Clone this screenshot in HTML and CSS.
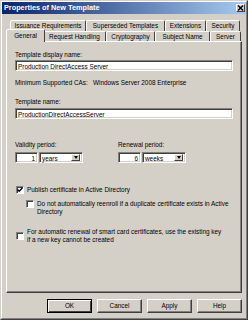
FILE: index.html
```html
<!DOCTYPE html>
<html lang="en">

<head>
    <meta charset="UTF-8">
    <title>Properties of New Template</title>
    <link rel="stylesheet" href="styles.css">
</head>

<body>
    <div class="window">
        <div class="frame">
            <div class="titlebar">
                <span class="title">Properties of New Template</span>
                <span class="close">
                    <svg width="7" height="6" viewBox="0 0 7 6">
                        <path d="M1 0.5 L6 5.5 M6 0.5 L1 5.5" stroke="#000" stroke-width="1.4" fill="none" />
                    </svg>
                </span>
            </div>

            <div class="content">
                <div class="tabrow back">
                    <div class="tab w76">Issuance Requirements</div>
                    <div class="tab w79">Superseded Templates</div>
                    <div class="tab w41">Extensions</div>
                    <div class="tab w34">Security</div>
                </div>
                <div class="tabrow front">
                    <div class="tab selected">General</div>
                    <div class="tab w63">Request Handling</div>
                    <div class="tab w49">Cryptography</div>
                    <div class="tab w55">Subject Name</div>
                    <div class="tab w31">Server</div>
                </div>

                <div class="panel">
                    <div class="label">Template display name:</div>
                    <div class="field wide">Production DirectAccess Server</div>

                    <div class="info">
                        <span class="info-key">Minimum Supported CAs:</span><span>Windows Server 2008 Enterprise</span>
                    </div>

                    <div class="label name-label">Template name:</div>
                    <div class="field wide short-gap">ProductionDirectAccessServer</div>

                    <div class="periods">
                        <div class="period">
                            <div class="label">Validity period:</div>
                            <div class="period-controls">
                                <div class="field number">1</div>
                                <div class="field select">
                                    <span>years</span>
                                    <span class="drop"><span class="arrow"></span></span>
                                </div>
                            </div>
                        </div>
                        <div class="period">
                            <div class="label">Renewal period:</div>
                            <div class="period-controls">
                                <div class="field number">6</div>
                                <div class="field select">
                                    <span>weeks</span>
                                    <span class="drop"><span class="arrow"></span></span>
                                </div>
                            </div>
                        </div>
                    </div>

                    <div class="check publish">
                        <span class="box">
                            <svg width="6" height="6" viewBox="0 0 6 6">
                                <path d="M0.5 2.5 L2.2 4.3 L5.5 0.8" stroke="#000" stroke-width="1.3" fill="none" />
                            </svg>
                        </span>
                        <span>Publish certificate in Active Directory</span>
                    </div>

                    <div class="check nested">
                        <span class="box"></span>
                        <span>Do not automatically reenroll if a duplicate certificate exists in Active<br>Directory</span>
                    </div>

                    <div class="check smartcard">
                        <span class="box"></span>
                        <span>For automatic renewal of smart card certificates, use the existing key<br>if a new key cannot be created</span>
                    </div>
                </div>

                <div class="buttons">
                    <div class="button default">OK</div>
                    <div class="button">Cancel</div>
                    <div class="button">Apply</div>
                    <div class="button">Help</div>
                </div>
            </div>
        </div>
    </div>
</body>

</html>
```

FILE: styles.css
```css
* {
    box-sizing: border-box;
}

body {
    margin: 0;
    font-family: "Liberation Sans", Arial, sans-serif;
    font-size: 6.4px;
    line-height: 8px;
    color: #000;
    background-color: #d4d0c8;
}

.window {
    width: 248px;
    height: 320px;
    border: 1px solid;
    border-color: #d4d0c8 #404040 #404040 #d4d0c8;
}

.frame {
    height: 100%;
    border: 1px solid;
    border-color: #fff #808080 #808080 #fff;
}

.titlebar {
    height: 12px;
    display: flex;
    align-items: center;
    justify-content: space-between;
    padding: 0 1px 0 2px;
    background: linear-gradient(to right, #0a246a, #a6caf0);
}

.title {
    color: #fff;
    font-weight: bold;
    font-size: 7.3px;
}

.close {
    width: 9px;
    height: 8px;
    display: flex;
    align-items: center;
    justify-content: center;
    background-color: #d4d0c8;
    border: 1px solid;
    border-color: #fff #404040 #404040 #fff;
}

.content {
    padding: 6px 4px 0;
}

/* tabs */
.tabrow {
    display: flex;
}

.tabrow.back {
    padding-left: 4px;
    height: 11px;
}

.tabrow.front {
    padding-left: 2px;
    height: 10px;
}

.tab {
    text-align: center;
    white-space: nowrap;
    line-height: 9px;
    border: 1px solid;
    border-bottom: none;
    border-color: #fff #404040 transparent #fff;
    border-radius: 2px 2px 0 0;
    background-color: #d4d0c8;
}

.tab.selected {
    position: relative;
    z-index: 1;
    width: 39px;
    height: 13px;
    margin: -2px -2px 0;
    padding-top: 1px;
}

.w31 { width: 31px; }
.w34 { width: 34px; }
.w41 { width: 41px; }
.w49 { width: 49px; }
.w55 { width: 55px; }
.w63 { width: 63px; }
.w76 { width: 76px; }
.w79 { width: 79px; }

/* panel */
.panel {
    height: 252px;
    padding: 9px 8px 0;
    border: 1px solid;
    border-color: #fff #404040 #404040 #fff;
    box-shadow: inset -1px -1px #808080;
}

.field {
    height: 11px;
    margin-top: 1px;
    padding: 0 2px;
    line-height: 11px;
    background-color: #fff;
    border: 1px solid;
    border-color: #808080 #fff #fff #808080;
    box-shadow: inset 1px 1px #404040, inset -1px -1px #d4d0c8;
    white-space: nowrap;
}

.field.wide {
    width: 218px;
}

.field.short-gap {
    margin-top: 2px;
}

.info {
    margin-top: 8px;
}

.info-key {
    display: inline-block;
    width: 78px;
}

.name-label {
    margin-top: 11px;
}

.periods {
    display: grid;
    grid-template-columns: 103px auto;
    margin-top: 22px;
}

.period-controls {
    display: flex;
    gap: 1px;
    margin-top: 3px;
}

.period-controls .field {
    margin-top: 0;
}

.field.number {
    width: 23px;
    text-align: right;
}

.field.select {
    width: 44px;
    display: flex;
    justify-content: space-between;
    padding: 0 2px 0 2px;
}

.drop {
    width: 9px;
    height: 7px;
    margin-top: 1px;
    display: flex;
    align-items: center;
    justify-content: center;
    background-color: #d4d0c8;
    border: 1px solid;
    border-color: #fff #404040 #404040 #fff;
}

.arrow {
    width: 0;
    height: 0;
    border-left: 2.5px solid transparent;
    border-right: 2.5px solid transparent;
    border-top: 3px solid #000;
}

/* checkboxes */
.check {
    display: flex;
    gap: 3px;
}

.box {
    flex: none;
    width: 8px;
    height: 8px;
    display: flex;
    align-items: center;
    justify-content: center;
    background-color: #fff;
    border: 1px solid;
    border-color: #808080 #fff #fff #808080;
    box-shadow: inset 1px 1px #404040;
}

.check.publish {
    margin: 23px 0 0 1px;
    align-items: center;
}

.check.nested {
    margin: 6px 0 0 11px;
    align-items: flex-start;
}

.check.smartcard {
    margin: 12px 0 0 1px;
    align-items: center;
}

/* buttons */
.buttons {
    display: flex;
    justify-content: flex-end;
    gap: 5px;
    margin-top: 6px;
}

.button {
    width: 45px;
    height: 14px;
    line-height: 12px;
    text-align: center;
    border: 1px solid;
    border-color: #fff #404040 #404040 #fff;
    box-shadow: inset -1px -1px #808080;
}

.button.default {
    border-color: #000;
    box-shadow: inset 1px 1px #fff, inset -1px -1px #404040;
}
```
